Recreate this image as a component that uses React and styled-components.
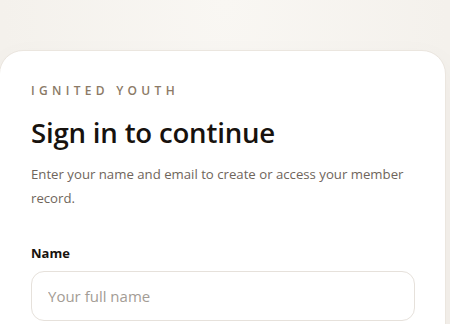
import styled, { createGlobalStyle } from 'styled-components';

const GlobalStyle = createGlobalStyle`
  html, body {
    margin: 0;
    padding: 0;
  }
  body {
    background: radial-gradient(ellipse at 50% 0%, #f9f7f3 0%, #f4f1ec 70%);
    font-family: "Open Sans", "Noto Sans", sans-serif;
    min-height: 324px;
    overflow: hidden;
  }
`;

const App = () => {
  return (
    <>
      <GlobalStyle />
      <Page>
        <Card>
          <Brand>Ignited Youth</Brand>
          <Title>Sign in to continue</Title>
          <Lead>Enter your name and email to create or access your member record.</Lead>
          <Field>
            <Label htmlFor="name">Name</Label>
            <Input id="name" placeholder="Your full name" />
          </Field>
        </Card>
      </Page>
    </>
  );
};

export default App;

const Page = styled.main`
  padding-top: 50px;
  padding-right: 4px;
  margin-left: -1px;
`;

const Card = styled.section`
  background: #ffffff;
  border: 1px solid #ebe6df;
  border-radius: 24px;
  padding: 32px 30px 40px 31px;
  box-shadow: 0 10px 30px rgba(80, 60, 30, 0.04);
`;

const Brand = styled.div`
  font-size: 12px;
  font-weight: 600;
  letter-spacing: 4.3px;
  text-transform: uppercase;
  color: #8b7a66;
  line-height: 16px;
`;

const Title = styled.h1`
  margin: 15px 0 0;
  font-size: 27.6px;
  font-weight: 600;
  line-height: 36px;
  color: #17120e;
  letter-spacing: -0.2px;
`;

const Lead = styled.p`
  margin: 12px 0 0;
  font-size: 13.2px;
  line-height: 24px;
  color: #6f655b;
  max-width: 380px;
`;

const Field = styled.div`
  margin-top: 34px;
  display: flex;
  flex-direction: column;
  gap: 9px;
`;

const Label = styled.label`
  font-size: 13px;
  font-weight: 700;
  color: #17120e;
  line-height: 18px;
`;

const Input = styled.input`
  box-sizing: border-box;
  width: 100%;
  height: 50px;
  border: 1px solid #e6e1db;
  border-radius: 13px;
  padding: 0 16px;
  font-family: inherit;
  font-size: 15px;
  color: #17120e;
  background: #fff;
  outline: none;
  &::placeholder {
    color: #a39c95;
  }
`;
